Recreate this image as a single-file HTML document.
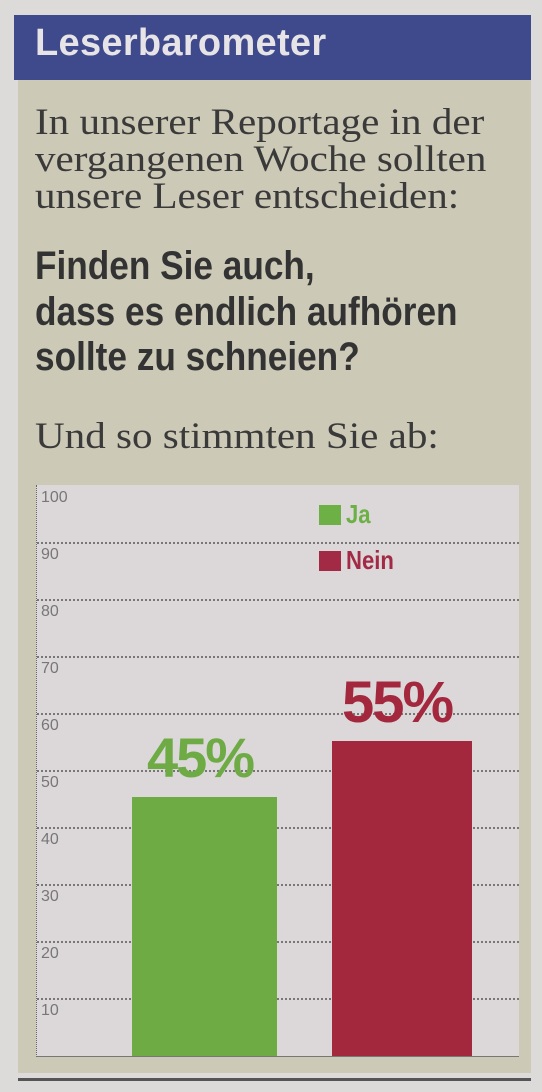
<!DOCTYPE html>
<html><head><meta charset="utf-8"><style>
body{margin:0;width:542px;height:1092px;background:#dddbd9;position:relative;overflow:hidden;font-family:"Liberation Sans",sans-serif}
.a{position:absolute;white-space:nowrap}
.hdr{position:absolute;left:14px;top:15px;width:517px;height:65px;background:#3f4a8c}
.panel{position:absolute;left:18px;top:80px;width:513px;height:993px;background:#cdc9b7}
.serif{font-family:"Liberation Serif",serif;font-size:37px;color:#3a3a3a;transform:scaleX(1.11);transform-origin:left top}
.bold{font-weight:bold;font-size:40px;color:#333;transform:scaleX(.88);transform-origin:left top}
.chart{position:absolute;left:36px;top:485px;width:482px;height:571px;background:#dcd8da;border-left:1px dotted #666;border-bottom:1px solid #777}
.g{position:absolute;left:0;width:482px;border-top:2px dotted #777}
.n{position:absolute;left:4px;font-size:16px;color:#777}
</style></head><body>
<div class="hdr"></div>
<div class="a" style="left:35px;top:22px;font-size:38px;font-weight:bold;color:#e6e4e6;letter-spacing:0.3px">Leserbarometer</div>
<div class="panel"></div>
<div class="a serif" style="left:35px;top:101px">In unserer Reportage in der</div>
<div class="a serif" style="left:35px;top:138px">vergangenen Woche sollten</div>
<div class="a serif" style="left:35px;top:175px">unsere Leser entscheiden:</div>
<div class="a bold" style="left:35px;top:244px">Finden Sie auch,</div>
<div class="a bold" style="left:35px;top:290px">dass es endlich aufhören</div>
<div class="a bold" style="left:35px;top:335px">sollte zu schneien?</div>
<div class="a serif" style="left:35px;top:415px">Und so stimmten Sie ab:</div>
<div class="chart">
<div class="g" style="top:57px"></div><div class="g" style="top:114px"></div><div class="g" style="top:171px"></div><div class="g" style="top:228px"></div><div class="g" style="top:285px"></div><div class="g" style="top:342px"></div><div class="g" style="top:399px"></div><div class="g" style="top:456px"></div><div class="g" style="top:513px"></div>
<div class="n" style="top:4px">100</div><div class="n" style="top:61px">90</div><div class="n" style="top:118px">80</div><div class="n" style="top:175px">70</div><div class="n" style="top:232px">60</div><div class="n" style="top:289px">50</div><div class="n" style="top:346px">40</div><div class="n" style="top:403px">30</div><div class="n" style="top:460px">20</div><div class="n" style="top:517px">10</div>
<div class="a" style="left:95px;top:312px;width:145px;height:259px;background:#6eab45"></div>
<div class="a" style="left:295px;top:256px;width:140px;height:315px;background:#a3273d"></div>
<div class="a" style="left:282px;top:20px;width:22px;height:20px;background:#6db045"></div>
<div class="a" style="left:309px;top:14px;font-size:26px;font-weight:bold;color:#6db045;transform:scaleX(.85);transform-origin:left top">Ja</div>
<div class="a" style="left:282px;top:66px;width:22px;height:20px;background:#a32a45"></div>
<div class="a" style="left:309px;top:60px;font-size:26px;font-weight:bold;color:#a32a45;transform:scaleX(.85);transform-origin:left top">Nein</div>
<div class="a" style="left:110px;top:240px;font-size:56px;font-weight:bold;color:#6eab45;letter-spacing:-2px">45%</div>
<div class="a" style="left:305px;top:184px;font-size:58px;font-weight:bold;color:#a3273d;letter-spacing:-2px">55%</div>
</div>
<div class="a" style="left:18px;top:1078px;width:513px;height:3px;background:#555"></div>
</body></html>
